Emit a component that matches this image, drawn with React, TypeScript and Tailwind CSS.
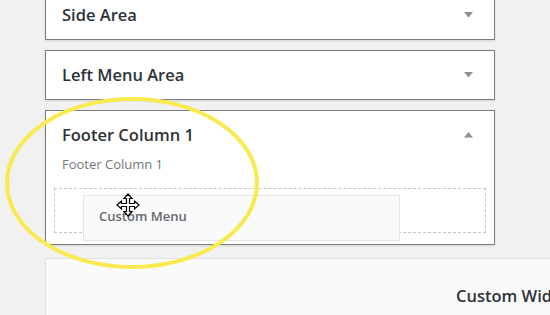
import React from 'react'

function Caret({ up = false }: { up?: boolean }) {
  return (
    <svg width="9" height="6" viewBox="0 0 9 6" className="text-[#8c8f94]">
      {up ? <path d="M0 5.5 L4.5 0 L9 5.5 Z" fill="currentColor" /> : <path d="M0 0 L9 0 L4.5 5.5 Z" fill="currentColor" />}
    </svg>
  )
}

function MoveCursor() {
  return (
    <svg width="24" height="24" viewBox="0 0 24 24">
      <path
        d="M12 1 L16 5.5 L13.5 5.5 L13.5 10.5 L18.5 10.5 L18.5 8 L23 12 L18.5 16 L18.5 13.5 L13.5 13.5 L13.5 18.5 L16 18.5 L12 23 L8 18.5 L10.5 18.5 L10.5 13.5 L5.5 13.5 L5.5 16 L1 12 L5.5 8 L5.5 10.5 L10.5 10.5 L10.5 5.5 L8 5.5 Z"
        fill="#fff"
        stroke="#000"
        strokeWidth="1.2"
        strokeLinejoin="miter"
      />
    </svg>
  )
}

function Panel({ title, children, up }: { title: string; children?: React.ReactNode; up?: boolean }) {
  return (
    <div className="w-[450px] border border-[#7d7d7d] bg-white shadow-[0_1px_2px_rgba(0,0,0,0.12)]">
      <div className="flex h-[48px] items-center justify-between pl-4 pr-[21px]">
        <span className="text-[16.5px] font-semibold text-[#2c3338]">{title}</span>
        <Caret up={up} />
      </div>
      {children}
    </div>
  )
}

export default function App() {
  return (
    <div className="relative h-[315px] w-[550px] overflow-hidden bg-[#f1f1f1]" style={{ fontFamily: '"Open Sans", "Noto Sans", sans-serif' }}>
      <div className="ml-[45px] mt-[-10px] flex flex-col gap-[10px]">
        <Panel title="Side Area" />
        <Panel title="Left Menu Area" />
        <div className="relative">
          <Panel title="Footer Column 1" up>
            <div className="-mt-[4px] pl-4 text-[13px] text-[#72777c]">Footer Column 1</div>
            <div className="mx-2 mb-[11px] mt-[13px] h-[45px] border border-dashed border-[#c3c4c7]" />
          </Panel>
          <div className="absolute left-[38px] top-[85px] flex h-[46px] w-[317px] items-center border border-[#e5e5e5] bg-[#fafafa] pb-[2px] pl-[15px] text-[13px] font-semibold text-[#646970]">
            Custom Menu
          </div>
          <div className="absolute left-[71px] top-[83px]">
            <MoveCursor />
          </div>
        </div>
        <div className="mt-[3px] h-[80px] w-[520px] border border-[#e0e0e0] bg-[#fafafa] pl-[410px] pt-[25px]">
          <span className="whitespace-nowrap text-[16.5px] font-semibold text-[#2c3338]">Custom Widget Area</span>
        </div>
      </div>
      <svg className="pointer-events-none absolute left-0 top-0" width="550" height="315">
        <ellipse cx="132" cy="183" rx="125" ry="84" fill="none" stroke="#f8ea4f" strokeWidth="4" />
      </svg>
    </div>
  )
}
